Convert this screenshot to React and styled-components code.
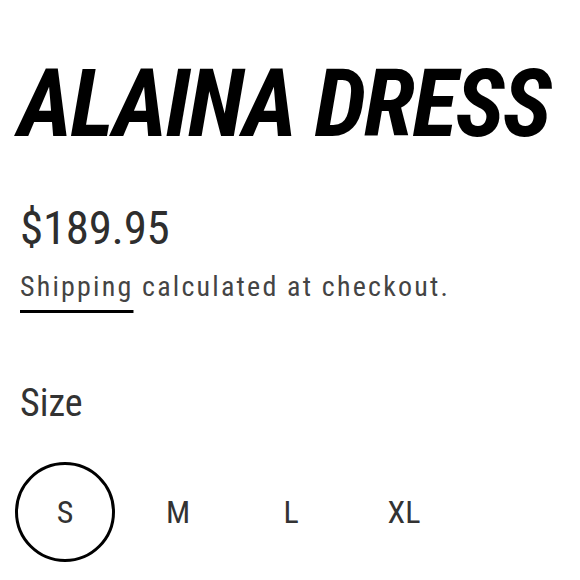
import React, { useState } from 'react'
import styled, { createGlobalStyle } from 'styled-components'

const GlobalStyle = createGlobalStyle`
  body {
    margin: 0;
    background: #fff;
    font-family: Roboto, "Noto Sans", sans-serif;
    font-stretch: condensed;
  }
`

const Product = styled.div`
  display: flex;
  flex-direction: column;
  align-items: flex-start;
  padding: 57px 0 0 20px;
`

const Title = styled.h1`
  margin: 0 0 0 -2px;
  font-size: 94px;
  line-height: 1;
  font-weight: 700;
  font-style: italic;
  letter-spacing: -2px;
  color: #000;
  text-transform: uppercase;
  white-space: nowrap;
`

const Price = styled.div`
  margin-top: 53px;
  font-size: 47px;
  line-height: 1;
  letter-spacing: -0.3px;
  color: #2e2e2e;
`

const Note = styled.p`
  margin: 22px 0 0;
  font-size: 28px;
  line-height: 1;
  letter-spacing: 2.2px;
  color: #444;

  span {
    text-decoration: underline;
    text-decoration-color: #000;
    text-decoration-thickness: 3px;
    text-underline-offset: 14px;
  }
`

const Label = styled.div`
  margin-top: 83px;
  font-size: 38px;
  line-height: 1;
  color: #333;
`

const Sizes = styled.div`
  display: flex;
  gap: 13px;
  margin: 40px 0 0 -5px;
`

const SizeOption = styled.button`
  display: flex;
  align-items: center;
  justify-content: center;
  width: 100px;
  height: 100px;
  padding: 0;
  border-radius: 50%;
  border: 3px solid ${p => (p.$active ? '#000' : 'transparent')};
  background: none;
  font-family: inherit;
  font-stretch: condensed;
  font-size: 32px;
  color: #333;
  cursor: pointer;
`

const sizes = ['S', 'M', 'L', 'XL']

export default function App() {
  const [size, setSize] = useState('S')
  return (
    <Product>
      <GlobalStyle />
      <Title>Alaina Dress</Title>
      <Price>$189.95</Price>
      <Note><span>Shipping</span> calculated at checkout.</Note>
      <Label>Size</Label>
      <Sizes>
        {sizes.map(s => (
          <SizeOption key={s} $active={s === size} onClick={() => setSize(s)}>{s}</SizeOption>
        ))}
      </Sizes>
    </Product>
  )
}
